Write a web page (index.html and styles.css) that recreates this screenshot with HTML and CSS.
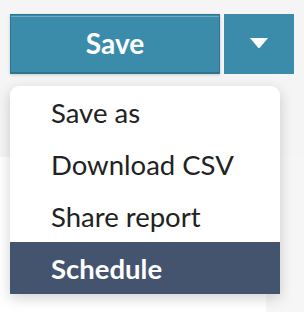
FILE: index.html
```html
<!DOCTYPE html>
<html>
<head>
<meta charset="utf-8">
<link rel="stylesheet" href="styles.css">
</head>
<body>
<div class="header">
  <div class="toolbar">
    <button class="btn-save">Save</button>
    <button class="btn-drop" aria-label="More options">
      <svg width="18" height="10" viewBox="0 0 18 10"><path d="M0 0 H18 L10 9.5 Q9 10.5 8 9.5 Z" fill="#fff"/></svg>
    </button>
  </div>
</div>
<div class="panel"></div>
<ul class="menu">
  <li class="item">Save as</li>
  <li class="item">Download CSV</li>
  <li class="item">Share report</li>
  <li class="item active">Schedule</li>
</ul>
</body>
</html>
```
FILE: styles.css
```css
html, body {
  margin: 0;
  padding: 0;
  height: 100%;
}
body {
  background: #f6f6f6;
  font-family: Lato, "Open Sans", sans-serif;
  position: relative;
  overflow: hidden;
}
.header {
  height: 157px;
  background: #f5f5f5;
}
.toolbar {
  display: flex;
  gap: 4px;
  padding: 14px 10px 0;
}
.btn-save {
  width: 210px;
  height: 60px;
  box-sizing: border-box;
  background: #3b8cab;
  border: 1px solid #2f7291;
  border-bottom-width: 2px;
  box-shadow: inset 0 1px 0 #3b8cab, inset 0 2px 0 #6ea9c1, 0 1px 3px rgba(0,0,0,0.18);
  color: #fff;
  font-family: inherit;
  font-weight: 700;
  font-size: 28px;
  padding: 0 0 2px;
  margin: 0;
}
.btn-drop {
  width: 70px;
  height: 60px;
  box-sizing: border-box;
  background: #3b8cab;
  border: 0;
  margin: 0;
  padding: 0 0 2px;
  display: flex;
  align-items: center;
  justify-content: center;
}
.btn-drop svg { display: block; }
.panel {
  width: 266px;
  height: 155px;
  background: #ffffff;
}
.menu {
  position: absolute;
  top: 86px;
  left: 10px;
  width: 270px;
  margin: 0;
  padding: 0;
  list-style: none;
  background: #fff;
  border-radius: 9px 9px 0 0;
  box-shadow: 0 4px 14px rgba(0,0,0,0.18);
  overflow: hidden;
}
.item {
  height: 52px;
  box-sizing: border-box;
  padding-left: 41px;
  display: flex;
  align-items: center;
  font-size: 27.5px;
  color: #222;
}
.item.active {
  background: #44546e;
  color: #fff;
  font-weight: 700;
}
```
